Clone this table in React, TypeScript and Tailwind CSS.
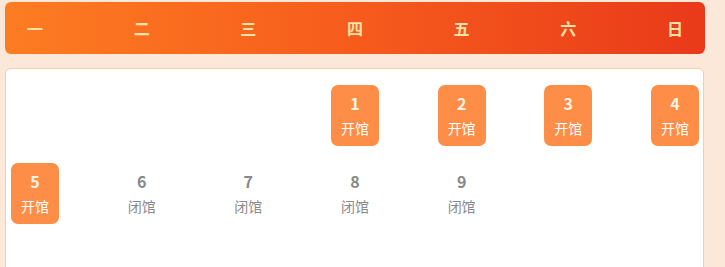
import React from "react";

const heads = ["一", "二", "三", "四", "五", "六", "日"];

type Cell = { d: number; open: boolean } | null;

const rows: Cell[][] = [
  [null, null, null, { d: 1, open: true }, { d: 2, open: true }, { d: 3, open: true }, { d: 4, open: true }],
  [{ d: 5, open: true }, { d: 6, open: false }, { d: 7, open: false }, { d: 8, open: false }, { d: 9, open: false }, null, null],
];

export default function App() {
  return (
    <div
      className="w-[725px] h-[267px] overflow-hidden bg-[#fbe8d9] pt-[2px]"
      style={{ fontFamily: '"Noto Sans CJK SC", "Noto Sans", sans-serif' }}
    >
      <div className="ml-[5px] w-[700px] h-[52px] rounded-[6px] bg-gradient-to-r from-[#fd7c22] via-[#f65b1c] to-[#e9391a] flex items-center justify-between px-[6px]">
        {heads.map((h) => (
          <div key={h} className="w-[48px] text-center text-[16px] font-semibold text-[#ffe2a6] leading-none">
            {h}
          </div>
        ))}
      </div>
      <div className="mt-[14px] ml-[5px] w-[699px] h-[220px] bg-white border border-[#f3cfa8] rounded-[6px] pt-[16px] pl-[5px] pr-[4px] flex flex-col gap-[17px]">
        {rows.map((r, i) => (
          <div key={i} className="flex justify-between">
            {r.map((c, j) =>
              c === null ? (
                <div key={j} className="w-[48px] h-[61px]" />
              ) : c.open ? (
                <div key={j} className="w-[48px] h-[61px] rounded-[7px] bg-[#fd8d47] flex flex-col items-center">
                  <div className="mt-[8px] text-[16px] leading-[20px] font-bold text-[#fff4e4]">{c.d}</div>
                  <div className="mt-[5px] text-[14px] leading-[20px] text-white">开馆</div>
                </div>
              ) : (
                <div key={j} className="w-[48px] h-[61px] flex flex-col items-center">
                  <div className="mt-[8px] text-[16px] leading-[20px] font-bold text-[#888888]">{c.d}</div>
                  <div className="mt-[5px] text-[14px] leading-[20px] text-[#8a8a8a]">闭馆</div>
                </div>
              )
            )}
          </div>
        ))}
      </div>
    </div>
  );
}
